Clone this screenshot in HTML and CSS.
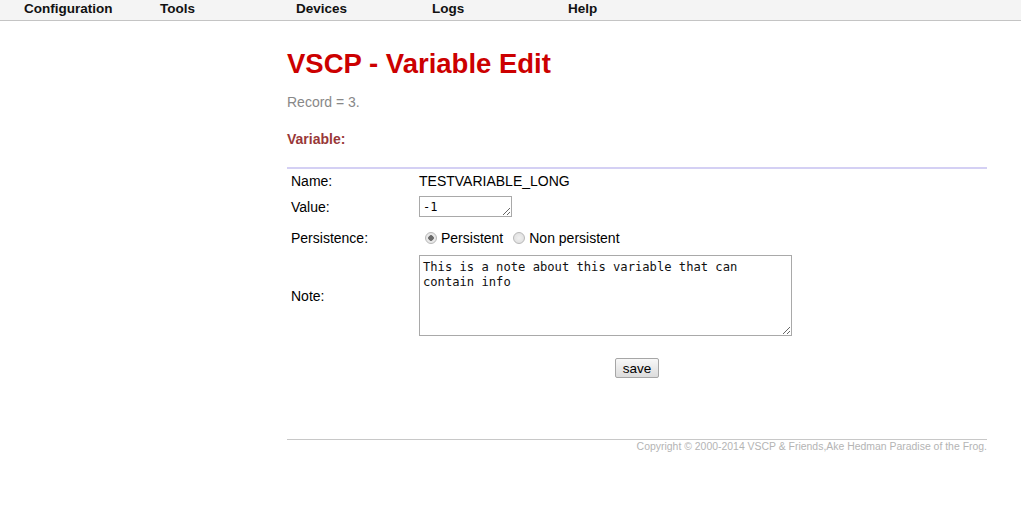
FILE: index.html
```html
<!DOCTYPE html>
<html>
<head>
<meta charset="utf-8">
<title>VSCP - Variable Edit</title>
<link rel="stylesheet" href="styles.css">
</head>
<body>
<nav class="menubar">
  <span class="menu-item">Configuration</span>
  <span class="menu-item">Tools</span>
  <span class="menu-item">Devices</span>
  <span class="menu-item">Logs</span>
  <span class="menu-item">Help</span>
</nav>
<main class="content">
  <h1 class="title">VSCP - Variable Edit</h1>
  <p class="record">Record = 3.</p>
  <h4 class="section">Variable:</h4>
  <form class="form">
    <div class="row row-name">
      <div class="label">Name:</div>
      <div class="field">TESTVARIABLE_LONG</div>
    </div>
    <div class="row row-value">
      <div class="label">Value:</div>
      <div class="field"><textarea class="value-input">-1</textarea></div>
    </div>
    <div class="row row-persist">
      <div class="label">Persistence:</div>
      <div class="field radios">
        <label class="radio"><input type="radio" name="p" checked> Persistent</label>
        <label class="radio"><input type="radio" name="p"> Non persistent</label>
      </div>
    </div>
    <div class="row row-note">
      <div class="label">Note:</div>
      <div class="field"><textarea class="note-input">This is a note about this variable that can
contain info</textarea></div>
    </div>
    <div class="actions"><button type="button" class="save">save</button></div>
  </form>
  <footer class="footer">Copyright © 2000-2014 VSCP &amp; Friends,Ake Hedman Paradise of the Frog.</footer>
</main>
</body>
</html>
```
FILE: styles.css
```css
body {
  margin: 0;
  font-family: "Liberation Sans", Arial, sans-serif;
  font-size: 14px;
  color: #000;
  background: #fff;
}
.menubar {
  display: flex;
  height: 20px;
  background: #f4f4f4;
  border-bottom: 1px solid #c4c4c4;
}
.menu-item {
  width: 136px;
  box-sizing: border-box;
  padding-left: 24px;
  font-weight: bold;
  font-size: 13.5px;
  line-height: 17px;
  color: #111;
}
.content {
  margin-left: 287px;
  width: 700px;
}
.title {
  margin: 27px 0 0;
  font-size: 27.5px;
  line-height: 32px;
  color: #cc0000;
  font-weight: bold;
}
.record {
  margin: 14px 0 0;
  line-height: 16px;
  color: #888;
}
.section {
  margin: 21px 0 0;
  font-size: 14px;
  line-height: 16px;
  color: #993838;
  font-weight: bold;
}
.form {
  margin-top: 20px;
  border-top: 2px solid #d4d0f4;
  padding-top: 0;
}
.row {
  display: grid;
  grid-template-columns: 132px 1fr;
  align-items: center;
}
.label {
  padding-left: 4px;
}
.row-name { height: 23px; }
.row-value { height: 29px; }
.row-persist { height: 33px; }
.row-note { height: 83px; }
.value-input {
  display: block;
  box-sizing: border-box;
  width: 93px;
  height: 21px;
  margin: 0;
  padding: 3px 3px 1px;
  border: 1px solid #a9a9a9;
  font-family: "DejaVu Sans Mono", monospace;
  font-size: 12px;
  line-height: 14px;
  resize: both;
  overflow: hidden;
}
.note-input {
  display: block;
  box-sizing: border-box;
  width: 373px;
  height: 81px;
  margin: 0;
  padding: 4px 3px 2px;
  border: 1px solid #a9a9a9;
  font-family: "DejaVu Sans Mono", monospace;
  font-size: 12.15px;
  line-height: 15px;
  color: #111;
  resize: both;
}
.radios {
  display: flex;
  align-items: center;
}
.radio {
  display: inline-flex;
  align-items: center;
  margin-right: 4px;
}
.radio input {
  appearance: none;
  -webkit-appearance: none;
  box-sizing: border-box;
  margin: 0 4px 0 6px;
  width: 12px;
  height: 12px;
  border-radius: 50%;
  border: 1px solid #b8b8b8;
  background: radial-gradient(circle, #f0f0f0 0%, #dcdcdc 100%);
}
.radio input:checked {
  background: radial-gradient(circle, #6a6a6a 0 2.5px, #e8e8e8 3px);
}
.actions {
  display: flex;
  justify-content: center;
  padding: 21px 0 0 0;
}
.save {
  font-family: "Liberation Sans", Arial, sans-serif;
  font-size: 13.5px;
  height: 20px;
  padding: 0 7px;
  border: 1px solid #a6a6a6;
  border-radius: 2px;
  background: linear-gradient(#f8f8f8, #dcdcdc);
  color: #000;
}
.footer {
  margin-top: 61px;
  border-top: 1px solid #c8c8c8;
  padding-top: 1px;
  text-align: right;
  font-size: 10.45px;
  line-height: 12px;
  color: #b4b4b4;
}
```
